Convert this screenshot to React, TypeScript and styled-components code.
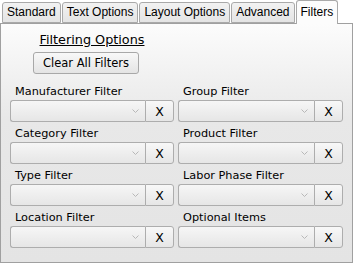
import React from 'react';
import styled, { createGlobalStyle } from 'styled-components';

const GlobalStyle = createGlobalStyle`
  body {
    margin: 0;
    background: #ffffff;
  }
`;

const Wrapper = styled.div`
  width: 353px;
`;

const TabBar = styled.div`
  display: flex;
  align-items: flex-end;
  height: 23px;
  padding-left: 2px;
  position: relative;
  z-index: 1;
`;

const Tab = styled.div<{ $active?: boolean }>`
  box-sizing: border-box;
  height: ${(p) => (p.$active ? '24px' : '21px')};
  margin-bottom: ${(p) => (p.$active ? '-1px' : '0')};
  margin-right: 1px;
  padding: ${(p) => (p.$active ? '4px 4px 0' : '2px 4px 0')};
  border: 1px solid #a9a9a9;
  border-bottom: ${(p) => (p.$active ? 'none' : '1px solid #a9a9a9')};
  border-radius: 3px 3px 0 0;
  background: ${(p) => (p.$active ? '#fcfcfc' : 'linear-gradient(#f2f2f2, #e4e4e4)')};
  font-family: 'Liberation Sans', Arial, sans-serif;
  font-size: 12px;
  color: #000;
  white-space: nowrap;
`;

const Panel = styled.div`
  box-sizing: border-box;
  height: 240px;
  border: 1px solid #a0a0a0;
  background: linear-gradient(#fcfcfc, #e8e8e8 40%, #e4e4e4);
  padding: 7px 0 0 9px;
`;

const Grid = styled.div`
  display: grid;
  grid-template-columns: 164px 165px;
  column-gap: 4px;
`;

const HeaderCell = styled.div`
  display: flex;
  flex-direction: column;
  align-items: center;
  padding-bottom: 10px;
`;

const Heading = styled.div`
  font-family: 'DejaVu Sans', Tahoma, sans-serif;
  font-size: 12.8px;
  text-decoration: underline;
  color: #000;
  line-height: 17px;
  margin-bottom: 4px;
`;

const ClearButton = styled.button`
  box-sizing: border-box;
  height: 22px;
  width: 106px;
  margin-right: 12px;
  border: 1px solid #a8a8a8;
  border-radius: 3px;
  background: linear-gradient(#f8f8f8, #e4e4e4);
  font-family: 'DejaVu Sans', Tahoma, sans-serif;
  font-size: 11.5px;
  color: #000;
  padding: 0;
`;

const Field = styled.div`
  display: flex;
  flex-direction: column;
  margin-bottom: 4px;
`;

const Label = styled.div`
  font-family: 'DejaVu Sans', Tahoma, sans-serif;
  font-size: 11.3px;
  color: #000;
  line-height: 16px;
  padding-left: 5px;
`;

const Control = styled.div`
  display: flex;
  height: 22px;
`;

const Select = styled.div`
  box-sizing: border-box;
  flex: 1;
  border: 1px solid #adadad;
  border-right: none;
  border-radius: 3px 0 0 3px;
  background: linear-gradient(#f6f6f6, #e6e6e6);
  display: flex;
  align-items: center;
  justify-content: flex-end;
  padding-right: 6px;
`;

const ClearX = styled.div`
  box-sizing: border-box;
  width: 29px;
  border: 1px solid #adadad;
  border-radius: 0 3px 3px 0;
  background: linear-gradient(#f8f8f8, #e6e6e6);
  font-family: 'DejaVu Sans', Tahoma, sans-serif;
  font-size: 12.5px;
  color: #000;
  display: flex;
  align-items: center;
  justify-content: center;
`;

const Chevron = () => (
  <svg width="7" height="4" viewBox="0 0 7 4">
    <path d="M0.5 0.5 L3.5 3.5 L6.5 0.5" fill="none" stroke="#b8b8b8" strokeWidth="1" />
  </svg>
);

const FilterField: React.FC<{ label: string }> = ({ label }) => (
  <Field>
    <Label>{label}</Label>
    <Control>
      <Select>
        <Chevron />
      </Select>
      <ClearX>X</ClearX>
    </Control>
  </Field>
);

const filters = [
  ['Manufacturer Filter', 'Group Filter'],
  ['Category Filter', 'Product Filter'],
  ['Type Filter', 'Labor Phase Filter'],
  ['Location Filter', 'Optional Items'],
];

const tabs = ['Standard', 'Text Options', 'Layout Options', 'Advanced', 'Filters'];

export default function App() {
  return (
    <Wrapper>
      <GlobalStyle />
      <TabBar>
        {tabs.map((t) => (
          <Tab key={t} $active={t === 'Filters'}>
            {t}
          </Tab>
        ))}
      </TabBar>
      <Panel>
        <Grid>
          <HeaderCell>
            <Heading>Filtering Options</Heading>
            <ClearButton>Clear All Filters</ClearButton>
          </HeaderCell>
          <div />
          {filters.map(([a, b]) => (
            <React.Fragment key={a}>
              <FilterField label={a} />
              <FilterField label={b} />
            </React.Fragment>
          ))}
        </Grid>
      </Panel>
    </Wrapper>
  );
}
